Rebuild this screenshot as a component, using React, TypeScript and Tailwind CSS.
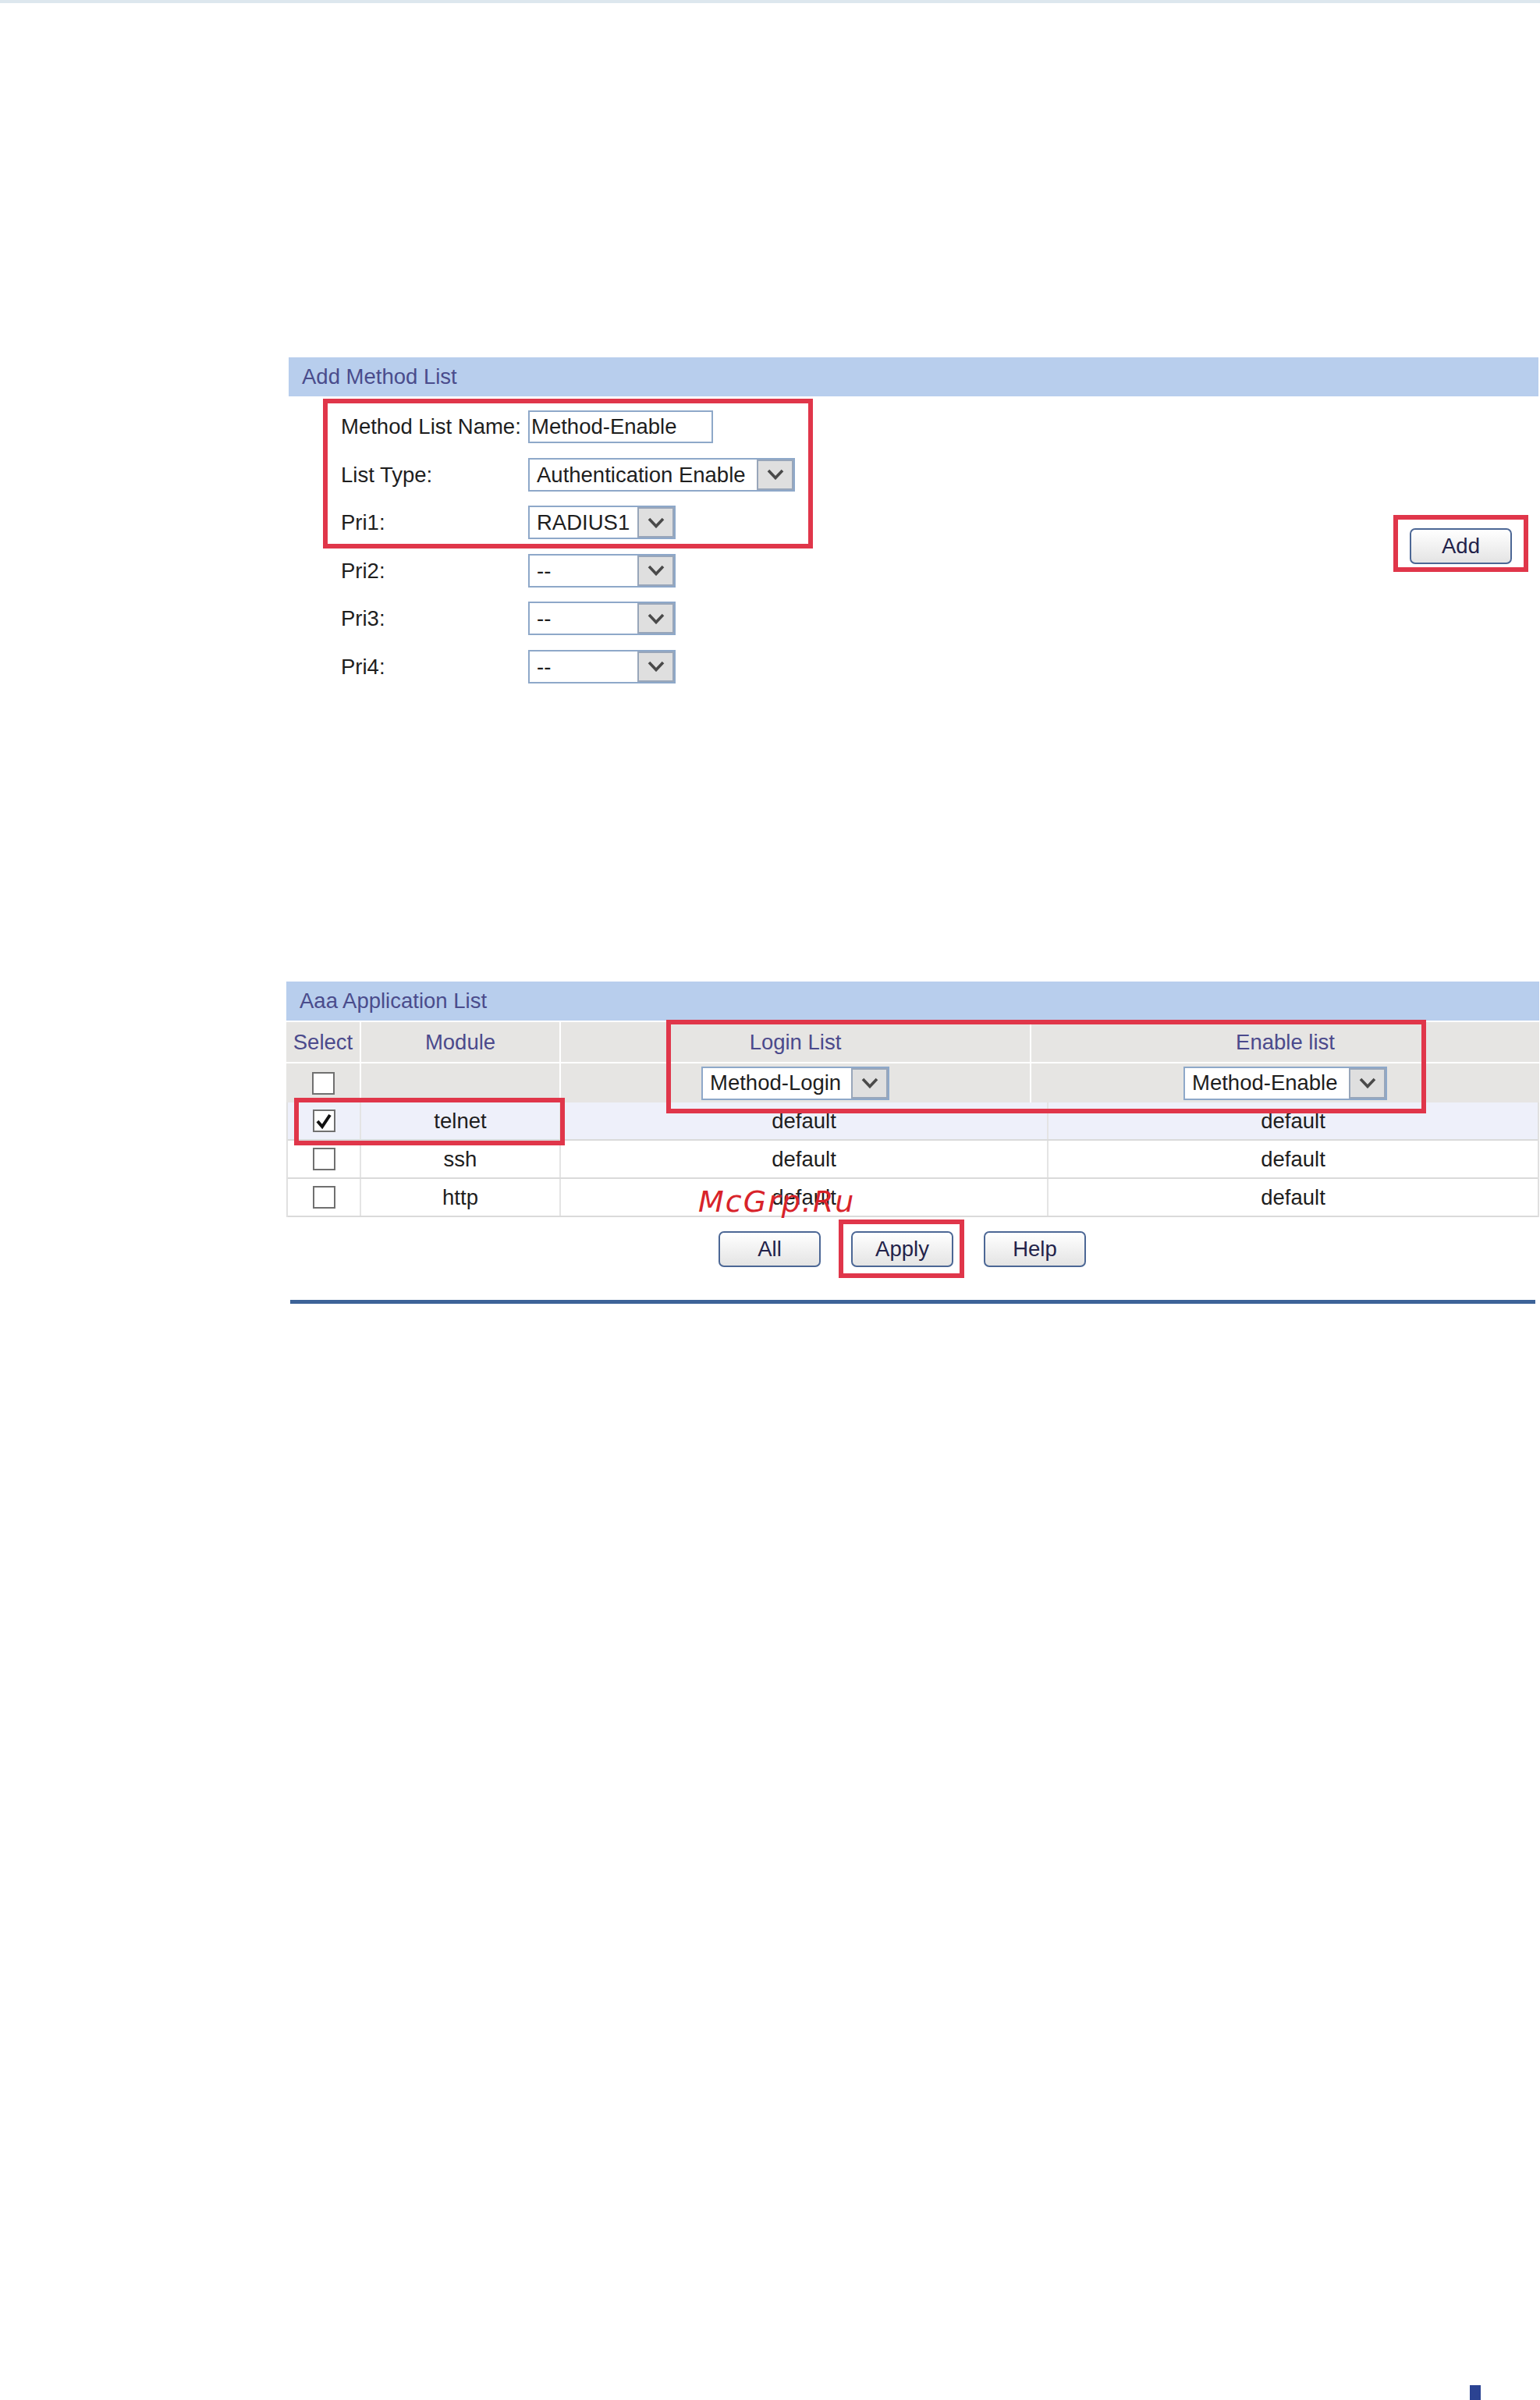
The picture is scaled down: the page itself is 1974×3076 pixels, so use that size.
import React from "react";

const Chevron = () => (
  <svg width="22" height="14" viewBox="0 0 22 14" fill="none">
    <polyline points="2,2 11,11.5 20,2" stroke="#4a4a4a" strokeWidth="3.6" strokeLinejoin="miter" />
  </svg>
);

function Select({ value, width }: { value: string; width: string }) {
  return (
    <div className={`flex h-[43px] ${width} border-2 border-[#8ea8c9] bg-white`}>
      <span className="flex flex-1 items-center overflow-hidden whitespace-nowrap pl-[9px] text-[27.5px] leading-none text-[#1e1e1e]">
        {value}
      </span>
      <span className="flex h-full w-[47px] items-center justify-center border-2 border-[#98a6ba] bg-[#dfdfdf]">
        <Chevron />
      </span>
    </div>
  );
}

function Checkbox({ checked }: { checked?: boolean }) {
  return (
    <span className="flex h-[29px] w-[29px] items-center justify-center border-2 border-[#707070] bg-white">
      {checked && (
        <svg width="22" height="22" viewBox="0 0 22 22" fill="none">
          <polyline points="3,11 9,18 19,3" stroke="#111" strokeWidth="4" />
        </svg>
      )}
    </span>
  );
}

function Btn({ label }: { label: string }) {
  return (
    <div className="flex h-[46px] w-[131px] items-center justify-center rounded-[7px] border-2 border-[#4c6795] bg-gradient-to-b from-white to-[#e4e4e4] text-[27.5px] leading-none text-[#23234a]">
      {label}
    </div>
  );
}

const RedBox = ({ cls }: { cls: string }) => (
  <span className={`pointer-events-none absolute border-[6px] border-[#e0364a] ${cls}`} />
);

export default function App() {
  const formRows: { label: string; el: React.ReactNode }[] = [
    {
      label: "Method List Name:",
      el: (
        <div className="flex h-[42px] w-[237px] items-center border-2 border-[#8ea8c9] bg-white pl-[2px] text-[27.5px] leading-none text-[#1e1e1e]">
          Method-Enable
        </div>
      ),
    },
    { label: "List Type:", el: <Select value="Authentication Enable" width="w-[342px]" /> },
    { label: "Pri1:", el: <Select value="RADIUS1" width="w-[189px]" /> },
    { label: "Pri2:", el: <Select value="--" width="w-[189px]" /> },
    { label: "Pri3:", el: <Select value="--" width="w-[189px]" /> },
    { label: "Pri4:", el: <Select value="--" width="w-[189px]" /> },
  ];

  const dataRows = [
    { m: "telnet", checked: true, bg: "bg-[#eef0fa]" },
    { m: "ssh", checked: false, bg: "bg-white" },
    { m: "http", checked: false, bg: "bg-white" },
  ];

  return (
    <div className="relative h-[3076px] w-[1974px] overflow-hidden bg-white font-['Liberation_Sans',Arial,sans-serif]">
      <div className="h-[4px] bg-[#dde7ee]" />

      {/* Add Method List */}
      <section className="ml-[370px] mt-[454px] w-[1602px]">
        <div className="flex h-[50px] items-center bg-[#b8ceed] pl-[17px] text-[27.5px] leading-none text-[#4a4c8c]">
          Add Method List
        </div>
        <div className="relative flex justify-between">
          <div className="pl-[67px] pt-[8px]">
            {formRows.map((r) => (
              <div key={r.label} className="flex h-[61.5px] items-center">
                <span className="w-[240px] whitespace-nowrap text-[27.5px] leading-none text-[#1e1e1e]">{r.label}</span>
                {r.el}
              </div>
            ))}
          </div>
          <RedBox cls="left-[44px] top-[3px] h-[192px] w-[628px]" />
          <div className="pr-[34px] pt-[169px]">
            <div className="relative">
              <Btn label="Add" />
              <RedBox cls="-left-[21px] -top-[17px] h-[73px] w-[173px]" />
            </div>
          </div>
        </div>
      </section>

      {/* Aaa Application List */}
      <section className="ml-[367px] mt-[373px] w-[1606px]">
        <div className="flex h-[50px] items-center bg-[#b8ceed] pl-[17px] text-[27.5px] leading-none text-[#4a4c8c]">
          Aaa Application List
        </div>
        <div className="relative">
          <div className="mt-[2px] grid grid-cols-[94px_254px_601px_651px] gap-[2px] text-[27.5px] leading-none text-[#4b4a8c]">
            <div className="flex h-[51px] items-center justify-center bg-[#e6e5e3]">Select</div>
            <div className="flex h-[51px] items-center justify-center bg-[#e6e5e3]">Module</div>
            <div className="flex h-[51px] items-center justify-center bg-[#e6e5e3]">Login List</div>
            <div className="flex h-[51px] items-center justify-center bg-[#e6e5e3]">Enable list</div>
            <div className="flex h-[50px] items-center justify-center bg-[#e6e5e3]">
              <Checkbox />
            </div>
            <div className="h-[50px] bg-[#e6e5e3]" />
            <div className="flex h-[50px] items-center justify-center bg-[#e6e5e3]">
              <Select value="Method-Login" width="w-[241px]" />
            </div>
            <div className="flex h-[50px] items-center justify-center bg-[#e6e5e3]">
              <Select value="Method-Enable" width="w-[261px]" />
            </div>
          </div>
          <div className="border-x-2 border-[#e0e0e0] text-[27.5px] leading-none text-[#1e1e1e]">
            {dataRows.map((r) => (
              <div key={r.m} className={`grid h-[49px] grid-cols-[94px_256px_625px_1fr] border-b-2 border-[#dadada] ${r.bg}`}>
                <div className="flex items-center justify-center border-r-2 border-[#e4e4e4]">
                  <Checkbox checked={r.checked} />
                </div>
                <div className="flex items-center justify-center border-r-2 border-[#e4e4e4]">{r.m}</div>
                <div className="flex items-center justify-center border-r-2 border-[#e4e4e4]">default</div>
                <div className="flex items-center justify-center">default</div>
              </div>
            ))}
          </div>
          <RedBox cls="left-[487px] -top-[3px] h-[120px] w-[974px]" />
          <RedBox cls="left-[10px] top-[97px] h-[61px] w-[347px]" />
        </div>
        <div className="mt-[18px] flex gap-[39px] pl-[554px]">
          <Btn label="All" />
          <div className="relative">
            <Btn label="Apply" />
            <RedBox cls="-left-[16px] -top-[15px] h-[75px] w-[161px]" />
          </div>
          <Btn label="Help" />
        </div>
        <div className="ml-[5px] mt-[42px] h-[5px] w-[1596px] bg-[#3d6398]" />
      </section>

      <div className="ml-[1884px] mt-[1386px] h-[19px] w-[14px] bg-[#2b4392]" />

      <span className="absolute left-[895px] top-[1521px] whitespace-nowrap font-['DejaVu_Sans',sans-serif] text-[38px] italic leading-none tracking-[2px] text-[#d8232a]">
        McGrp.Ru
      </span>
    </div>
  );
}
